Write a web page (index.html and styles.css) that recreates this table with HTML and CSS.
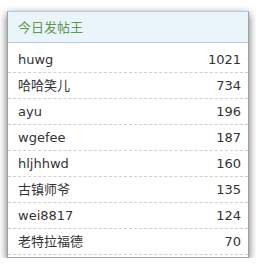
FILE: index.html
```html
<!DOCTYPE html>
<html lang="zh-CN">
<head>
<meta charset="utf-8">
<link rel="stylesheet" href="styles.css">
</head>
<body>
<div class="card">
  <div class="card-head">今日发帖王</div>
  <ul class="rank">
    <li class="row"><span class="name">huwg</span><span class="num">1021</span></li>
    <li class="row"><span class="name">哈哈笑儿</span><span class="num">734</span></li>
    <li class="row"><span class="name">ayu</span><span class="num">196</span></li>
    <li class="row"><span class="name">wgefee</span><span class="num">187</span></li>
    <li class="row"><span class="name">hljhhwd</span><span class="num">160</span></li>
    <li class="row"><span class="name">古镇师爷</span><span class="num">135</span></li>
    <li class="row"><span class="name">wei8817</span><span class="num">124</span></li>
    <li class="row"><span class="name">老特拉福德</span><span class="num">70</span></li>
  </ul>
</div>
</body>
</html>
```
FILE: styles.css
```css
html, body {
  margin: 0;
  padding: 0;
  background: #ffffff;
}
body {
  padding: 11px 0 0 7px;
  font-family: "DejaVu Sans", "Noto Sans CJK SC", sans-serif;
  font-size: 13px;
  color: #333333;
}
.card {
  width: 240px;
  height: 245px;
  border: 1px solid #a0a0a0;
  border-top-color: #b9cbd8;
  background: #ffffff;
  box-shadow: 0 3px 8px rgba(0, 0, 0, 0.6);
}
.card-head {
  height: 30px;
  line-height: 30px;
  padding-left: 10px;
  background: #e9f5fb;
  border-bottom: 1px solid #b3cde0;
  color: #62974a;
  font-family: "Noto Sans CJK SC", sans-serif;
  font-size: 13px;
}
.rank {
  list-style: none;
  margin: 0;
  padding: 4px 0 0 0;
}
.row {
  display: flex;
  justify-content: space-between;
  align-items: center;
  height: 25px;
  padding: 0 7px 0 10px;
  border-bottom: 1px dashed #d0d0d0;
}
.name, .num {
  line-height: 25px;
}
```
